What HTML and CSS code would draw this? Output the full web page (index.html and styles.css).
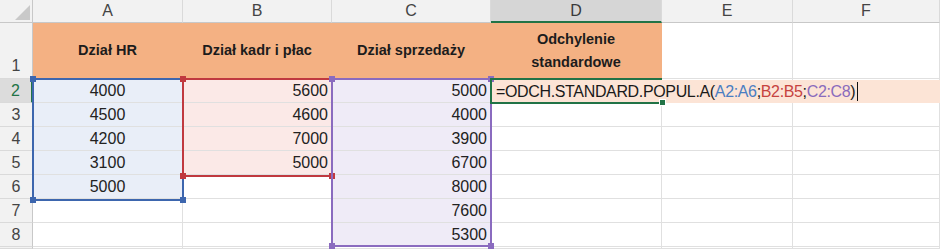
FILE: index.html
```html
<!DOCTYPE html>
<html lang="pl">
<head>
<meta charset="utf-8">
<title>Odchylenie standardowe</title>
<link rel="stylesheet" href="styles.css">
</head>
<body>
<div class="sheet">
  <div class="layer fills">
    <div class="fill fill-a"></div>
    <div class="fill fill-b"></div>
    <div class="fill fill-c"></div>
  </div>
  <div class="layer cells">
    <div class="corner"><svg width="33" height="23" viewBox="0 0 33 23"><polygon points="30,5 30,20 15,20" fill="#c9c9c9"/></svg></div>
    <div class="ch">A</div><div class="ch">B</div><div class="ch">C</div><div class="ch ch-sel">D</div><div class="ch">E</div><div class="ch">F</div>

    <div class="rh rh-tall">1</div>
    <div class="c hd">Dział HR</div><div class="c hd">Dział kadr i płac</div><div class="c hd">Dział sprzedaży</div><div class="c hd hd-last">Odchylenie<br>standardowe</div><div class="c"></div><div class="c"></div>

    <div class="rh rh-sel">2</div>
    <div class="c mid">4000</div><div class="c num">5600</div><div class="c num">5000</div><div class="c"></div><div class="c"></div><div class="c"></div>

    <div class="rh">3</div>
    <div class="c mid">4500</div><div class="c num">4600</div><div class="c num">4000</div><div class="c"></div><div class="c"></div><div class="c"></div>

    <div class="rh">4</div>
    <div class="c mid">4200</div><div class="c num">7000</div><div class="c num">3900</div><div class="c"></div><div class="c"></div><div class="c"></div>

    <div class="rh">5</div>
    <div class="c mid">3100</div><div class="c num">5000</div><div class="c num">6700</div><div class="c"></div><div class="c"></div><div class="c"></div>

    <div class="rh">6</div>
    <div class="c mid">5000</div><div class="c"></div><div class="c num">8000</div><div class="c"></div><div class="c"></div><div class="c"></div>

    <div class="rh">7</div>
    <div class="c"></div><div class="c"></div><div class="c num">7600</div><div class="c"></div><div class="c"></div><div class="c"></div>

    <div class="rh">8</div>
    <div class="c"></div><div class="c"></div><div class="c num">5300</div><div class="c"></div><div class="c"></div><div class="c"></div>

    <div class="rh"></div>
    <div class="c"></div><div class="c"></div><div class="c"></div><div class="c"></div><div class="c"></div><div class="c"></div>
  </div>
  <div class="layer marks">
    <div class="frame frame-a"><span class="h tl"></span><span class="h bl"></span><span class="h br"></span></div>
    <div class="frame frame-b"><span class="h tl"></span><span class="h bl"></span><span class="h br"></span></div>
    <div class="frame frame-c"><span class="h tl"></span><span class="h tr"></span><span class="h bl"></span><span class="h br"></span></div>
    <div class="formula">=ODCH.STANDARD.POPUL.A(<span class="ref-a">A2:A6</span>;<span class="ref-b">B2:B5</span>;<span class="ref-c">C2:C8</span>)<span class="caret"></span></div>
    <div class="active"><span class="h br"></span></div>
  </div>
</div>
</body>
</html>
```
FILE: styles.css
```css
* { box-sizing: border-box; }
html, body { margin: 0; padding: 0; background: #ffffff; }
body { width: 940px; height: 249px; overflow: hidden; font-family: "Liberation Sans", Arial, sans-serif; }

.sheet { display: grid; width: 940px; }
.layer {
  grid-area: 1 / 1;
  display: grid;
  grid-template-columns: 33px 150px 149px 159px 171px 131px 147px;
  grid-template-rows: 23px 56px repeat(7, 24px) 2px;
}
.fills, .marks { pointer-events: none; }

/* range fills (below cells) */
.fill-a { grid-column: 2; grid-row: 3 / 8; background: #e9eef8; }
.fill-b { grid-column: 3; grid-row: 3 / 7; background: #fbe9e7; }
.fill-c { grid-column: 4; grid-row: 3 / 10; background: #efebf7; }

/* cells */
.corner { background: #f2f2f2; border-right: 1px solid #c8c8c8; border-bottom: 1px solid #c8c8c8; }
.corner svg { display: block; }
.ch {
  background: #f2f2f2; color: #444; font-size: 16px;
  display: flex; align-items: center; justify-content: center;
  border-right: 1px solid #dadada; border-bottom: 1px solid #c8c8c8;
}
.ch-sel { background: #d6d6d6; border-bottom: 2px solid #217346; color: #3a3a3a; }

.rh {
  background: #f2f2f2; color: #444; font-size: 16px;
  display: flex; align-items: center; justify-content: center;
  border-right: 1px solid #c8c8c8; border-bottom: 1px solid #dadada;
}
.rh-tall { align-items: flex-end; padding-bottom: 3px; }
.rh-sel { background: #dcdcdc; color: #217346; border-right: 2px solid #217346; }

.c {
  border-right: 1px solid #e0e0e0; border-bottom: 1px solid #e0e0e0;
  font-size: 16px; color: #222; display: flex; align-items: center;
  padding: 0 4px; white-space: nowrap;
}
.mid { justify-content: center; }
.num { justify-content: flex-end; padding-right: 3px; }
.hd {
  background: #f4b183; border-right-color: #f4b183; border-bottom-color: #f4b183;
  justify-content: center; text-align: center;
  font-weight: bold; font-size: 14.5px; line-height: 23px; color: #1c1c1c;
}

/* overlays */
.formula {
  grid-column: 5 / 8; grid-row: 3;
  background: #fce4d6; font-size: 16px; letter-spacing: -0.35px; color: #1a1a1a;
  display: flex; align-items: center; padding-left: 4px; white-space: nowrap;
  margin-top: 1px; margin-left: 1px;
}
.ref-a { color: #4a7ec2; }
.ref-b { color: #c6423f; }
.ref-c { color: #8a6bbd; }
.caret { display: inline-block; width: 1px; height: 19px; background: #111; margin-left: 2px; }

.frame { position: relative; margin: -1px -1px -2px -1px; border: 2px solid; }
.frame-a { grid-column: 2; grid-row: 3 / 8; border-color: #3d66ae; }
.frame-b { grid-column: 3; grid-row: 3 / 7; border-color: #c0393f; }
.frame-c { grid-column: 4; grid-row: 3 / 10; margin-bottom: 0; border-color: #8a6bbf; }
.active {
  grid-column: 5; grid-row: 3; position: relative;
  margin: -1px 0 -1px -1px; border: 2px solid #217346; border-right: none;
}

.h { position: absolute; width: 6px; height: 6px; }
.tl { left: -4px; top: -4px; }
.tr { right: -4px; top: -4px; }
.bl { left: -4px; bottom: -4px; }
.br { right: -4px; bottom: -4px; }
.frame-a .h { background: #3d66ae; }
.frame-b .h { background: #c0393f; }
.frame-c .h { background: #8a6bbf; }
.active .h { background: #217346; border: 1px solid #fff; width: 7px; height: 7px; right: -4px; }
```
